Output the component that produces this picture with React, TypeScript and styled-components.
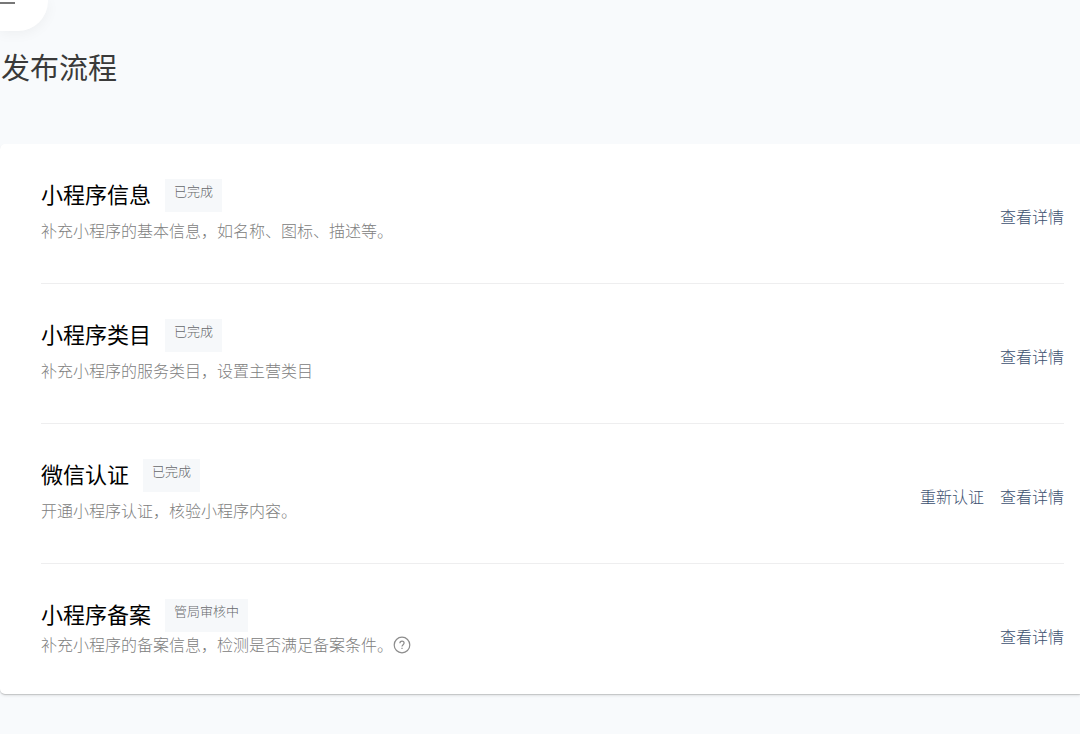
import React from "react";
import styled, { createGlobalStyle } from "styled-components";

const GlobalStyle = createGlobalStyle`
  * { box-sizing: border-box; }
  body {
    margin: 0;
    background: #f8fafc;
    color: #000;
    font-family: "Noto Sans CJK SC", sans-serif;
    font-weight: 300;
  }
`;

const Page = styled.div`
  min-height: 100vh;
  padding-bottom: 40px;
`;

const MenuButton = styled.button`
  display: block;
  width: 48px;
  height: 31px;
  padding: 2px 0 0;
  border: 0;
  border-radius: 0 0 30px 0;
  background: #fff;
  box-shadow: 0 2px 14px rgba(0, 0, 0, 0.05);
`;

const MenuLine = styled.span`
  display: block;
  width: 15px;
  height: 2px;
  margin-bottom: 27px;
  background: #777;
`;

const PageTitle = styled.h1`
  margin: 15px 0 58px 1px;
  font-size: 29px;
  line-height: 40px;
  font-weight: 400;
  color: #3a3a3a;
`;

const Card = styled.main`
  background: #fff;
  border-radius: 5px 0 0 5px;
  padding: 0 16px 0 41px;
  box-shadow: 0 1px 1px rgba(0, 0, 0, 0.16), 0 2px 3px rgba(0, 0, 0, 0.08);
`;

const Step = styled.section`
  display: flex;
  justify-content: space-between;
  padding: 35px 0 41px;
  border-bottom: 1px solid #eeeeef;

  &:last-child {
    padding-bottom: 38px;
    border-bottom: 0;
  }
`;

const StepHead = styled.div<{ $tight?: boolean }>`
  display: flex;
  align-items: flex-start;
  gap: 14px;
  margin-bottom: ${(p) => (p.$tight ? 0 : 6)}px;
`;

const StepTitle = styled.h2`
  margin: 0;
  font-size: 22px;
  line-height: 28px;
  font-weight: 400;
`;

const Tag = styled.span`
  height: 33px;
  padding: 0 9px;
  background: #f6f8fa;
  color: #66696c;
  font-size: 13px;
  line-height: 24px;
`;

const Description = styled.p`
  display: flex;
  align-items: center;
  margin: 0;
  font-size: 16px;
  line-height: 24px;
  color: #808080;
`;

const HelpButton = styled.button`
  display: flex;
  padding: 2px 0 0;
  border: 0;
  background: none;
  color: #8c8c8c;
`;

const Actions = styled.nav`
  display: flex;
  gap: 16px;
  padding-top: 25px;
`;

const ActionLink = styled.a`
  font-size: 16px;
  line-height: 24px;
  color: #3c506f;
  text-decoration: none;
  white-space: nowrap;
`;

const HelpIcon = () => (
  <svg width="18" height="18" viewBox="0 0 18 18" fill="none" stroke="currentColor" strokeWidth="1.2" aria-hidden="true">
    <circle cx="9" cy="9" r="7.8" />
    <path d="M6.9 7.3c0-1.3.9-2.1 2.1-2.1s2.1.8 2.1 1.9c0 1.6-2.1 1.7-2.1 3.5" />
    <path d="M9 11.8v1.3" />
  </svg>
);

type StepData = {
  title: string;
  status: string;
  description: string;
  actions: string[];
  help?: boolean;
};

const steps: StepData[] = [
  { title: "小程序信息", status: "已完成", description: "补充小程序的基本信息，如名称、图标、描述等。", actions: ["查看详情"] },
  { title: "小程序类目", status: "已完成", description: "补充小程序的服务类目，设置主营类目", actions: ["查看详情"] },
  { title: "微信认证", status: "已完成", description: "开通小程序认证，核验小程序内容。", actions: ["重新认证", "查看详情"] },
  { title: "小程序备案", status: "管局审核中", description: "补充小程序的备案信息，检测是否满足备案条件。", actions: ["查看详情"], help: true },
];

export default function App() {
  return (
    <Page>
      <GlobalStyle />
      <MenuButton aria-label="菜单">
        <MenuLine />
      </MenuButton>
      <PageTitle>发布流程</PageTitle>
      <Card>
        {steps.map((step) => (
          <Step key={step.title}>
            <div>
              <StepHead $tight={step.help}>
                <StepTitle>{step.title}</StepTitle>
                <Tag>{step.status}</Tag>
              </StepHead>
              <Description>
                {step.description}
                {step.help && (
                  <HelpButton aria-label="备案条件说明">
                    <HelpIcon />
                  </HelpButton>
                )}
              </Description>
            </div>
            <Actions>
              {step.actions.map((action) => (
                <ActionLink key={action} href="#">
                  {action}
                </ActionLink>
              ))}
            </Actions>
          </Step>
        ))}
      </Card>
    </Page>
  );
}
